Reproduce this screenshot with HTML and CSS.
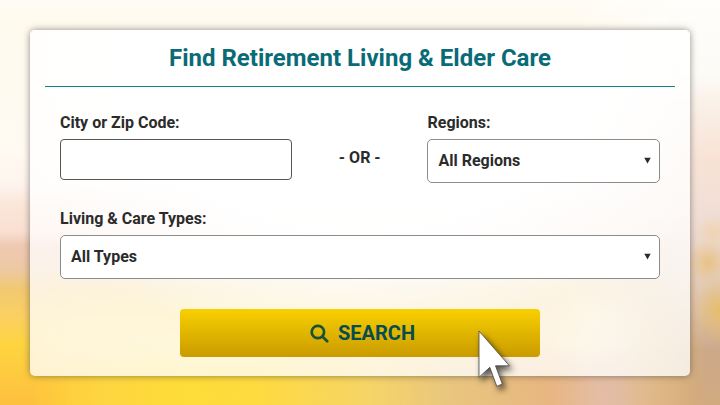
FILE: index.html
```html
<!DOCTYPE html>
<html lang="en">
<head>
<meta charset="utf-8">
<title>Find Retirement Living &amp; Elder Care</title>
<link rel="stylesheet" href="styles.css">
</head>
<body>
<form class="card">
  <h1 class="title"><span>Find Retirement Living &amp; Elder Care</span></h1>
  <div class="fields">
    <div class="row">
      <div class="field">
        <label class="label" for="city">City or Zip Code:</label>
        <input class="input" id="city" type="text">
      </div>
      <div class="or">- OR -</div>
      <div class="field">
        <span class="label">Regions:</span>
        <div class="select regions"><span>All Regions</span><svg class="arrow" viewBox="0 0 8 7"><path d="M0.3 0.3H7.7L4 6.8Z"/></svg></div>
      </div>
    </div>
    <div class="field types">
      <span class="label">Living &amp; Care Types:</span>
      <div class="select"><span>All Types</span><svg class="arrow" viewBox="0 0 8 7"><path d="M0.3 0.3H7.7L4 6.8Z"/></svg></div>
    </div>
    <button class="search" type="button">
      <svg class="glass" viewBox="0 0 19 19"><circle cx="7.9" cy="8" r="6.2"/><path d="M12.4 12.5L17.2 17.3"/></svg>
      <span>SEARCH</span>
    </button>
  </div>
</form>
<svg class="cursor" viewBox="0 0 50 70"><path d="M1 1V47.3L11.8 37.3L18.8 56.4L24.3 54L17.5 35.8H31.4Z"/></svg>
</body>
</html>
```

FILE: styles.css
```css
* { box-sizing: border-box; }

body {
  margin: 0;
  width: 720px;
  height: 405px;
  overflow: hidden;
  padding: 30px;
  position: relative;
  isolation: isolate;
  font-family: Roboto, "Liberation Sans", sans-serif;
  font-weight: 700;
  color: #2b2b2b;
  background: linear-gradient(#fffdf6 0, #fffaee 25px, #fffaf2 150px, #fef4ee 185px, #fbe6d8 205px, #f9dfd2 232px, #efcab4 245px, #edc9a4 268px, #f2c971 290px, #fbd060 318px, #fed43f 345px, #fdc03f 405px);
}

/* Blurred landscape: right side and ground light */
body::before,
body::after {
  content: "";
  position: absolute;
  inset: 0;
  z-index: -2;
}

body::before {
  background:
    radial-gradient(ellipse 22px 22px at 708px 262px, rgba(234, 184, 92, 0.6), transparent),
    radial-gradient(ellipse 24px 34px at 719px 310px, rgba(232, 190, 100, 0.85), transparent),
    radial-gradient(ellipse 20px 18px at 714px 232px, rgba(243, 205, 150, 0.5), transparent),
    linear-gradient(#fffefb 0, #fdfbf7 75px, #faf0e7 105px, #f8e2d5 160px, #f0ded6 215px, #e6d2c4 265px, #ddc0a6 310px, #cda98a 350px, #d1aa80 405px);
  mask-image: linear-gradient(90deg, transparent 560px, #000 705px);
}

body::after {
  z-index: -1;
  background:
    radial-gradient(ellipse 60px 60px at 590px 310px, rgba(255, 255, 255, 0.8), transparent),
    linear-gradient(transparent 280px, rgba(247, 232, 222, 0.4) 340px, transparent 375px),
    linear-gradient(90deg, #fdbb40 0, #fecb3c 40px, #fed640 110px, #fedc38 180px, #fedb40 260px, #f6d468 370px, #e8c67e 450px, #e8b682 550px, #e4bda4 600px, #dcbb9d 680px, #c8a17e 720px);
  mask-image: linear-gradient(transparent 270px, rgba(0, 0, 0, 0.7) 345px, #000 380px), linear-gradient(90deg, transparent 20px, #000 70px, #000 620px, transparent 700px);
  mask-composite: intersect;
}

.card {
  position: relative;
  z-index: 0;
  width: 660px;
  height: 346px;
  padding: 0 15px;
  border-radius: 5px;
  background: rgba(255, 255, 255, 0.76);
  box-shadow: 0 0 7px rgba(70, 65, 60, 0.6);
}

/* Bright haze behind the form controls */
.card::before {
  content: "";
  position: absolute;
  inset: 0;
  z-index: -1;
  border-radius: inherit;
  background: radial-gradient(ellipse 400px 290px at 330px 30px, rgba(255, 255, 255, 0.95) 60%, transparent);
}

.title {
  height: 57px;
  margin: 0;
  padding-top: 13px;
  border-bottom: 1px solid #16808c;
  color: #0a6b78;
  font-size: 24px;
  line-height: 30px;
  text-align: center;
  white-space: nowrap;
}

.fields {
  padding: 26px 15px 0;
  display: flex;
  flex-direction: column;
}

.row {
  display: grid;
  grid-template-columns: 232px 135.5px 232.5px;
}

.label {
  display: block;
  height: 26px;
  font-size: 16px;
  line-height: 20px;
  white-space: nowrap;
}

.input {
  display: block;
  width: 100%;
  height: 41px;
  border: 1px solid #555;
  border-radius: 4px;
  background: #fff;
  font: inherit;
}

.or {
  padding-top: 35px;
  font-size: 16px;
  line-height: 20px;
  text-align: center;
}

.select {
  display: flex;
  align-items: center;
  justify-content: space-between;
  height: 44px;
  padding: 0 8px 2px 10px;
  border: 1px solid #8c8c8c;
  border-radius: 5px;
  background: #fff;
  font-size: 16px;
}

.regions {
  margin-left: -0.5px;
  padding-left: 10.5px;
}

.arrow { width: 7px; height: 7px; fill: #2b2b2b; }

.types { margin-top: 26px; }

.search {
  display: flex;
  align-items: center;
  justify-content: center;
  gap: 9px;
  align-self: center;
  width: 360px;
  height: 48px;
  margin-top: 30px;
  padding: 0 0 0 5px;
  border: 0;
  border-radius: 4px;
  background: linear-gradient(#f8d000, #c99b00);
  color: #064c50;
  font: 700 20px Roboto, "Liberation Sans", sans-serif;
}

.glass {
  width: 19px;
  height: 19px;
  fill: none;
  stroke: #165138;
  stroke-width: 2.7;
  stroke-linecap: round;
}

.cursor {
  position: absolute;
  left: 478px;
  top: 330px;
  width: 50px;
  height: 70px;
  overflow: visible;
  fill: #fff;
  stroke: #454545;
  stroke-width: 0.8;
  filter: drop-shadow(3px 4px 3px rgba(0, 0, 0, 0.65));
}
```
